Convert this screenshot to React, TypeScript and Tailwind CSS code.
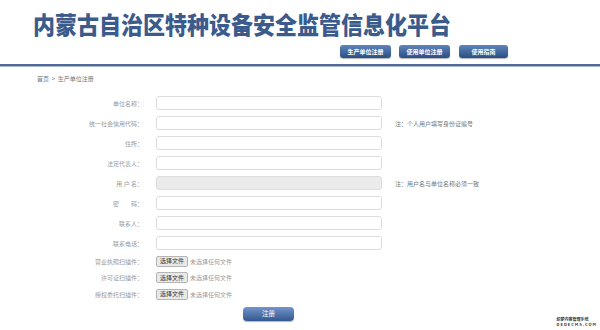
const font = { fontFamily: '"Noto Sans CJK SC", "Noto Sans", sans-serif' };

const fields = [
  { label: "单位名称：" },
  { label: "统一社会信用代码：", note: "注：个人用户填写身份证编号" },
  { label: "住所：" },
  { label: "法定代表人：" },
  { label: "用 户 名：", disabled: true, note: "注：用户名与单位名称必须一致" },
  { label: "密　　码：" },
  { label: "联系人：" },
  { label: "联系电话：" },
];

const files = ["营业执照扫描件：", "许可证扫描件：", "授权委托扫描件："];

const NavButton = ({ children, w }: { children: string; w: string }) => (
  <button
    className={`${w} h-[13px] rounded-[3px] bg-gradient-to-b from-[#5f84bb] to-[#2b4f85] text-[6px] font-bold leading-none text-white shadow-[0_1px_1px_rgba(0,0,0,0.3)]`}
  >
    {children}
  </button>
);

export default function App() {
  return (
    <div className="w-[600px] h-[330px] overflow-hidden bg-white" style={font}>
      {/* header */}
      <div className="pl-[33px] pt-[10px]">
        <h1 className="text-[22px] leading-[24px] font-black text-[#3b5b8c] scale-y-[1.1] origin-top">
          内蒙古自治区特种设备安全监管信息化平台
        </h1>
      </div>
      <div className="flex gap-[8px] pl-[340px] mt-[11px]">
        <NavButton w="w-[51px]">生产单位注册</NavButton>
        <NavButton w="w-[51px]">使用单位注册</NavButton>
        <NavButton w="w-[49px] ml-[1px]">使用指南</NavButton>
      </div>
      <div className="mt-[6px] h-[3px] bg-[#4f6a96] border-b border-[#a9b8cf]" />

      {/* breadcrumb */}
      <div className="pl-[37px] mt-[8px] text-[6px] leading-[8px] text-[#777]">首页 &nbsp;&gt;&nbsp; 生产单位注册</div>

      {/* form */}
      <div className="mt-[10px]">
        {fields.map((f) => (
          <div key={f.label} className="flex items-center h-[20px]">
            <div className="w-[143px] text-right text-[6px] text-[#999] whitespace-pre">{f.label}</div>
            <div
              className={`ml-[13px] w-[226px] h-[14px] rounded-[3px] border border-[#dddddd] ${
                f.disabled ? "bg-[#ebebeb]" : "bg-white"
              }`}
            />
            {f.note && <div className="ml-[13px] text-[6px] text-[#777]">{f.note}</div>}
          </div>
        ))}
        <div>
          {files.map((f) => (
            <div key={f} className="flex items-center h-[16.5px]">
              <div className="w-[143px] text-right text-[6px] text-[#999]">{f}</div>
              <button className="ml-[13px] w-[32px] h-[11px] rounded-[2px] border border-[#b5b5b5] bg-[#e9e9e9] text-[6px] leading-none text-[#333]">
                选择文件
              </button>
              <span className="ml-[2px] text-[6px] text-[#999]">未选择任何文件</span>
            </div>
          ))}
        </div>
        <div className="flex items-start justify-between mt-[4px]">
          <button className="ml-[243px] w-[51px] h-[14px] rounded-[4px] bg-gradient-to-b from-[#7395cb] to-[#33588f] text-[6.5px] leading-none text-white shadow-[0_1px_1px_rgba(0,0,0,0.3)]">
            注册
          </button>
          <div className="mr-[3px] mt-[10px] text-[4px] leading-[5px] text-[#333] font-bold">
            <div>织梦内容管理系统</div>
            <div className="tracking-[1px]">DEDECMS.COM</div>
          </div>
        </div>
      </div>
    </div>
  );
}
